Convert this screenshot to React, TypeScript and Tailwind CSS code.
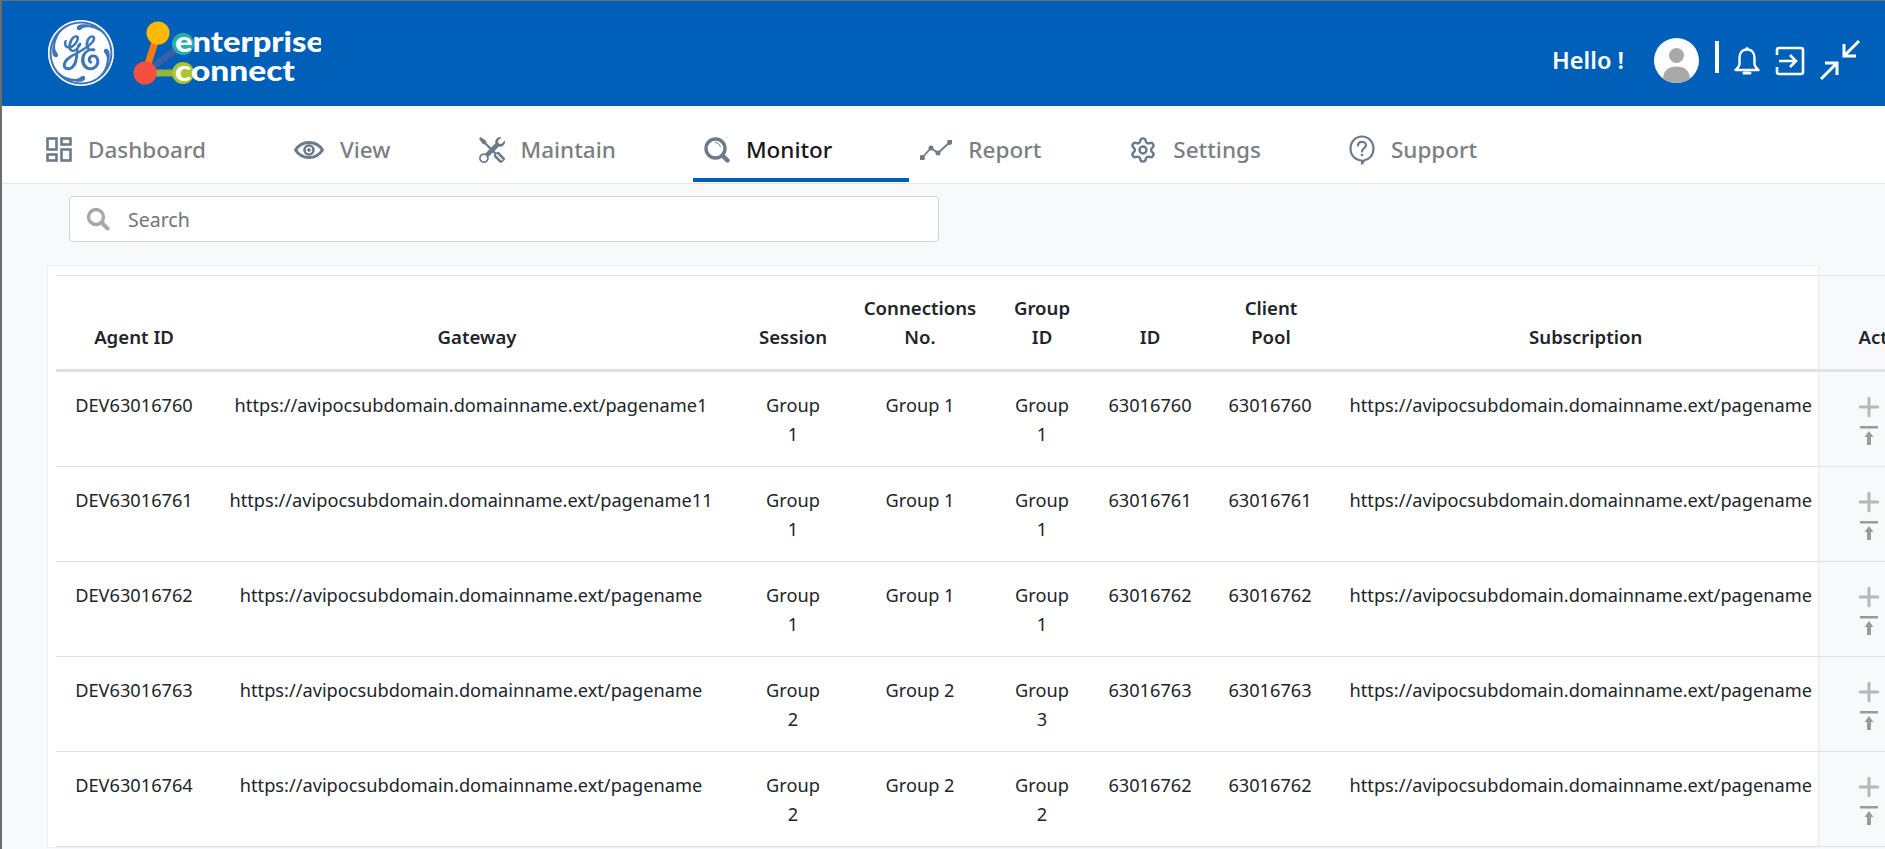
import { Plus, Settings } from "lucide-react";
import { BsTools } from "react-icons/bs";
import { SiGeneralelectric } from "react-icons/si";
import { ReactNode } from "react";

const rows = [
  ["DEV63016760", "https://avipocsubdomain.domainname.ext/pagename1", "Group 1", "Group 1", "Group 1", "63016760", "63016760"],
  ["DEV63016761", "https://avipocsubdomain.domainname.ext/pagename11", "Group 1", "Group 1", "Group 1", "63016761", "63016761"],
  ["DEV63016762", "https://avipocsubdomain.domainname.ext/pagename", "Group 1", "Group 1", "Group 1", "63016762", "63016762"],
  ["DEV63016763", "https://avipocsubdomain.domainname.ext/pagename", "Group 2", "Group 2", "Group 3", "63016763", "63016763"],
  ["DEV63016764", "https://avipocsubdomain.domainname.ext/pagename", "Group 2", "Group 2", "Group 2", "63016762", "63016762"],
];

const subscription = "https://avipocsubdomain.domainname.ext/pagename";

function DashboardIcon() {
  return (
    <svg width="26" height="25" viewBox="0 0 26 25" fill="none" stroke="#6b7b8c" strokeWidth="2.6">
      <rect x="1.5" y="1.5" width="9" height="11" />
      <rect x="15.5" y="1.5" width="9" height="6" />
      <rect x="1.5" y="17.5" width="9" height="6" />
      <rect x="15.5" y="12.5" width="9" height="11" />
    </svg>
  );
}

function EyeIcon() {
  return (
    <svg width="30" height="18" viewBox="0 0 30 18" fill="none" stroke="#6b7b8c">
      <path d="M1.5 9C5 3.5 9.5 1.5 15 1.5S25 3.5 28.5 9C25 14.5 20.5 16.5 15 16.5S5 14.5 1.5 9Z" strokeWidth="3" />
      <circle cx="15" cy="9" r="4.5" strokeWidth="2.6" />
      <circle cx="15" cy="9" r="1.4" fill="#6b7b8c" />
    </svg>
  );
}

function MonitorIcon() {
  return (
    <svg width="26" height="26" viewBox="0 0 26 26" fill="none" stroke="#6b7b8c">
      <circle cx="11.5" cy="11.5" r="9.5" strokeWidth="3.4" />
      <path d="M18.5 18.5 23.5 23.5" strokeWidth="4.4" strokeLinecap="round" />
      <path d="M11 5.5c2.6 0 5 2 5.4 4.6" strokeWidth="1" />
    </svg>
  );
}

function ReportIcon() {
  return (
    <svg width="32" height="20" viewBox="0 0 32 20" fill="none" stroke="#6b7b8c" strokeWidth="1.8">
      <path d="M2 18 11 8 18 13 30 2" />
      <circle cx="2" cy="18" r="2" fill="#6b7b8c" />
      <circle cx="11" cy="8" r="1.6" fill="#6b7b8c" />
      <circle cx="18" cy="13" r="1.6" fill="#6b7b8c" />
      <circle cx="30" cy="2" r="2" fill="#6b7b8c" />
    </svg>
  );
}

function SupportIcon() {
  return (
    <svg width="26" height="30" viewBox="0 0 26 30" fill="none" stroke="#6b7b8c" strokeWidth="2.2">
      <path d="M13 25.5C6.6 25.5 1.5 20.4 1.5 13.5S6.6 1.5 13 1.5 24.5 6.6 24.5 13.5 19.6 25 15.5 25.2L13 28.5Z" strokeLinejoin="round" />
      <path d="M9 10.5C9 8.2 10.8 6.8 13 6.8S17 8.2 17 10.3C17 13 13 13.2 13 16.5" strokeLinecap="round" />
      <circle cx="13" cy="20" r="1.3" fill="#6b7b8c" stroke="none" />
    </svg>
  );
}

function BellIcon() {
  return (
    <svg width="26" height="30" viewBox="0 0 26 30" fill="none" stroke="#ffffff" strokeWidth="2.4" className="mr-[15px]">
      <path d="M13 3.5C7.8 3.5 5.5 7.5 5.5 12V18C5.5 20.5 3.5 22 1.5 24H24.5C22.5 22 20.5 20.5 20.5 18V12C20.5 7.5 18.2 3.5 13 3.5Z" strokeLinejoin="round" />
      <circle cx="13" cy="2.5" r="1.6" fill="#ffffff" stroke="none" />
      <path d="M10 27H16" strokeLinecap="round" strokeWidth="3" />
    </svg>
  );
}

function Logo() {
  return (
    <svg width="190" height="74" viewBox="0 0 190 74" className="ml-[17px] mt-[8px]">
      <line x1="27" y1="12" x2="14" y2="52" stroke="#fb7a0e" strokeWidth="7" />
      <line x1="14" y1="52" x2="52" y2="23" stroke="#3a5fa8" strokeWidth="7" />
      <line x1="14" y1="52" x2="52" y2="52" stroke="#9ab03c" strokeWidth="7" />
      <circle cx="27" cy="12" r="11.5" fill="#ffba00" />
      <circle cx="14" cy="52" r="11.5" fill="#f4503f" />
      <circle cx="52" cy="23" r="11" fill="#27b0a9" />
      <circle cx="52" cy="52" r="11" fill="#a9c52f" />
      <text x="44" y="31" fontFamily="Lato, sans-serif" fontWeight="900" fontSize="29" fill="#ffffff" textLength="149" lengthAdjust="spacingAndGlyphs">enterprise</text>
      <text x="44" y="60" fontFamily="Lato, sans-serif" fontWeight="900" fontSize="29" fill="#ffffff" textLength="120" lengthAdjust="spacingAndGlyphs">connect</text>
    </svg>
  );
}

function TopBar() {
  return (
    <header className="flex h-[105px] items-center bg-[#0060b9] text-white">
      <div className="relative ml-[46px] mt-[-1px] h-[66px] w-[66px] rounded-full bg-[#3f75bb]">
        <SiGeneralelectric className="h-[66px] w-[66px] text-white" />
      </div>
      <Logo />
      <div className="ml-auto mt-[14px] flex items-center">
        <span className="mr-[30px] text-[23.5px] font-semibold">Hello !</span>
        <svg width="45" height="45" viewBox="0 0 45 45" className="mr-[16px]">
          <circle cx="22.5" cy="22.5" r="22.5" fill="#ffffff" />
          <circle cx="22.5" cy="17.5" r="7.5" fill="#a9a9a9" />
          <path d="M9 41C9 33 14.5 28.5 22.5 28.5S36 33 36 41C32 43.6 27.5 45 22.5 45S13 43.6 9 41Z" fill="#a9a9a9" />
        </svg>
        <div className="mb-[8px] mr-[15px] h-[32px] w-[4px] bg-white" />
        <BellIcon />
        <svg width="30" height="30" viewBox="0 0 30 30" fill="none" stroke="#ffffff" strokeWidth="2.6" className="mr-[14px]">
          <path d="M2 9V4a2 2 0 0 1 2-2h22a2 2 0 0 1 2 2v22a2 2 0 0 1-2 2H4a2 2 0 0 1-2-2v-5" />
          <path d="M4 15H21M15 9l6 6-6 6" />
        </svg>
        <svg width="42" height="42" viewBox="0 0 42 42" fill="none" stroke="#ffffff" strokeWidth="3" className="mb-[2px] mr-[24px]">
          <path d="M40 2 25 17M25 5V17H37" />
          <path d="M2 40 18 24M6 24H18V36" />
        </svg>
      </div>
    </header>
  );
}

function NavItem({ icon, label, active }: { icon: ReactNode; label: string; active?: boolean }) {
  return (
    <div
      className={
        "flex h-[76px] items-center gap-[16px] border-b-4 pb-[1px] pl-[11px] pr-[77px] pt-[16px] text-[22.5px] font-medium " +
        (active ? "border-[#0060b9] text-[#16181b]" : "border-transparent text-[#7b7f83]")
      }
    >
      {icon}
      <span>{label}</span>
    </div>
  );
}

function NavBar() {
  return (
    <nav className="flex h-[78px] border-b border-[#e3e6ea] bg-white pl-[33px]">
      <NavItem icon={<DashboardIcon />} label="Dashboard" />
      <NavItem icon={<EyeIcon />} label="View" />
      <NavItem icon={<BsTools size={26} color="#6b7b8c" />} label="Maintain" />
      <NavItem icon={<MonitorIcon />} label="Monitor" active />
      <NavItem icon={<ReportIcon />} label="Report" />
      <NavItem icon={<Settings size={28} strokeWidth={2.1} color="#6b7b8c" />} label="Settings" />
      <NavItem icon={<SupportIcon />} label="Support" />
    </nav>
  );
}

function SearchBox() {
  return (
    <div className="ml-[67px] mt-[12px] flex h-[46px] w-[870px] items-center gap-[18px] rounded border border-[#ced4da] bg-white pl-[16px]">
      <svg width="24" height="24" viewBox="0 0 24 24" fill="none" stroke="#a8a8a8">
        <circle cx="10" cy="10" r="7.5" strokeWidth="3.4" />
        <path d="M15.5 15.5 21.5 21.5" strokeWidth="4" strokeLinecap="round" />
      </svg>
      <span className="text-[19.5px] text-[#6c757d]">Search</span>
    </div>
  );
}

const th = "border-b-[3px] border-b-[#dee2e6] px-[4px] pb-[18px] pt-[16px] align-bottom text-[18.6px] font-semibold";
const td = "border-b border-b-[#dee2e6] px-[2px] pb-[17px] pt-[19px] align-top font-normal";

function UploadTop() {
  return (
    <svg width="18" height="19" viewBox="0 0 18 19" fill="#9b9b9b" className="mt-[4px]">
      <rect x="0" y="0" width="18" height="2.5" />
      <path d="M9 5 13.5 11H11V19H7V11H4.5Z" />
    </svg>
  );
}

function DataTable() {
  return (
    <div className="ml-[45px] mt-[23px] w-[1772px] border border-[#eef0f2] bg-white pl-[8px] pt-[9px]">
      <table className="w-[1864px] table-fixed border-collapse border-t border-t-[#dee2e6] text-center text-[#212529]">
        <colgroup>
          <col className="w-[156px]" />
          <col className="w-[518px]" />
          <col className="w-[126px]" />
          <col className="w-[128px]" />
          <col className="w-[116px]" />
          <col className="w-[100px]" />
          <col className="w-[140px]" />
          <col className="w-[478px]" />
          <col className="w-[102px]" />
        </colgroup>
        <thead>
          <tr className="h-[95px]">
            <th className={th}>Agent ID</th>
            <th className={th + " pl-[16px]"}>Gateway</th>
            <th className={th}>Session</th>
            <th className={th}>Connections No.</th>
            <th className={th + " px-[26px]"}>Group ID</th>
            <th className={th}>ID</th>
            <th className={th + " px-[32px] pl-[34px]"}>Client Pool</th>
            <th className={th + " pl-[18px]"}>Subscription</th>
            <th className={th + " border-l border-l-[#e6e8eb] bg-[#f8f9fa] pl-[40px] text-left"}>Action</th>
          </tr>
        </thead>
        <tbody>
          {rows.map((r) => (
            <tr key={r[0]} className="h-[95px]">
              <td className={td}>{r[0]}</td>
              <td className={td}>{r[1]}</td>
              <td className={td + " px-[33px]"}>{r[2]}</td>
              <td className={td}>{r[3]}</td>
              <td className={td + " px-[28px]"}>{r[4]}</td>
              <td className={td}>{r[5]}</td>
              <td className={td}>{r[6]}</td>
              <td className={td + " pl-[6px]"}>{subscription}</td>
              <td className={td + " border-l border-l-[#e6e8eb] bg-[#f8f9fa] !pl-[35px] !pt-[20px]"}>
                <Plus size={30} strokeWidth={2.4} color="#b8b8b8" />
                <div className="pl-[6px]">
                  <UploadTop />
                </div>
              </td>
            </tr>
          ))}
        </tbody>
      </table>
    </div>
  );
}

export default function App() {
  return (
    <div className="h-[849px] w-full overflow-hidden border-l-2 border-t border-[#6d6d6d] bg-[#f8f9fa] font-['Noto_Sans',sans-serif] text-[18.2px] leading-[29px]">
      <TopBar />
      <NavBar />
      <SearchBox />
      <DataTable />
    </div>
  );
}
